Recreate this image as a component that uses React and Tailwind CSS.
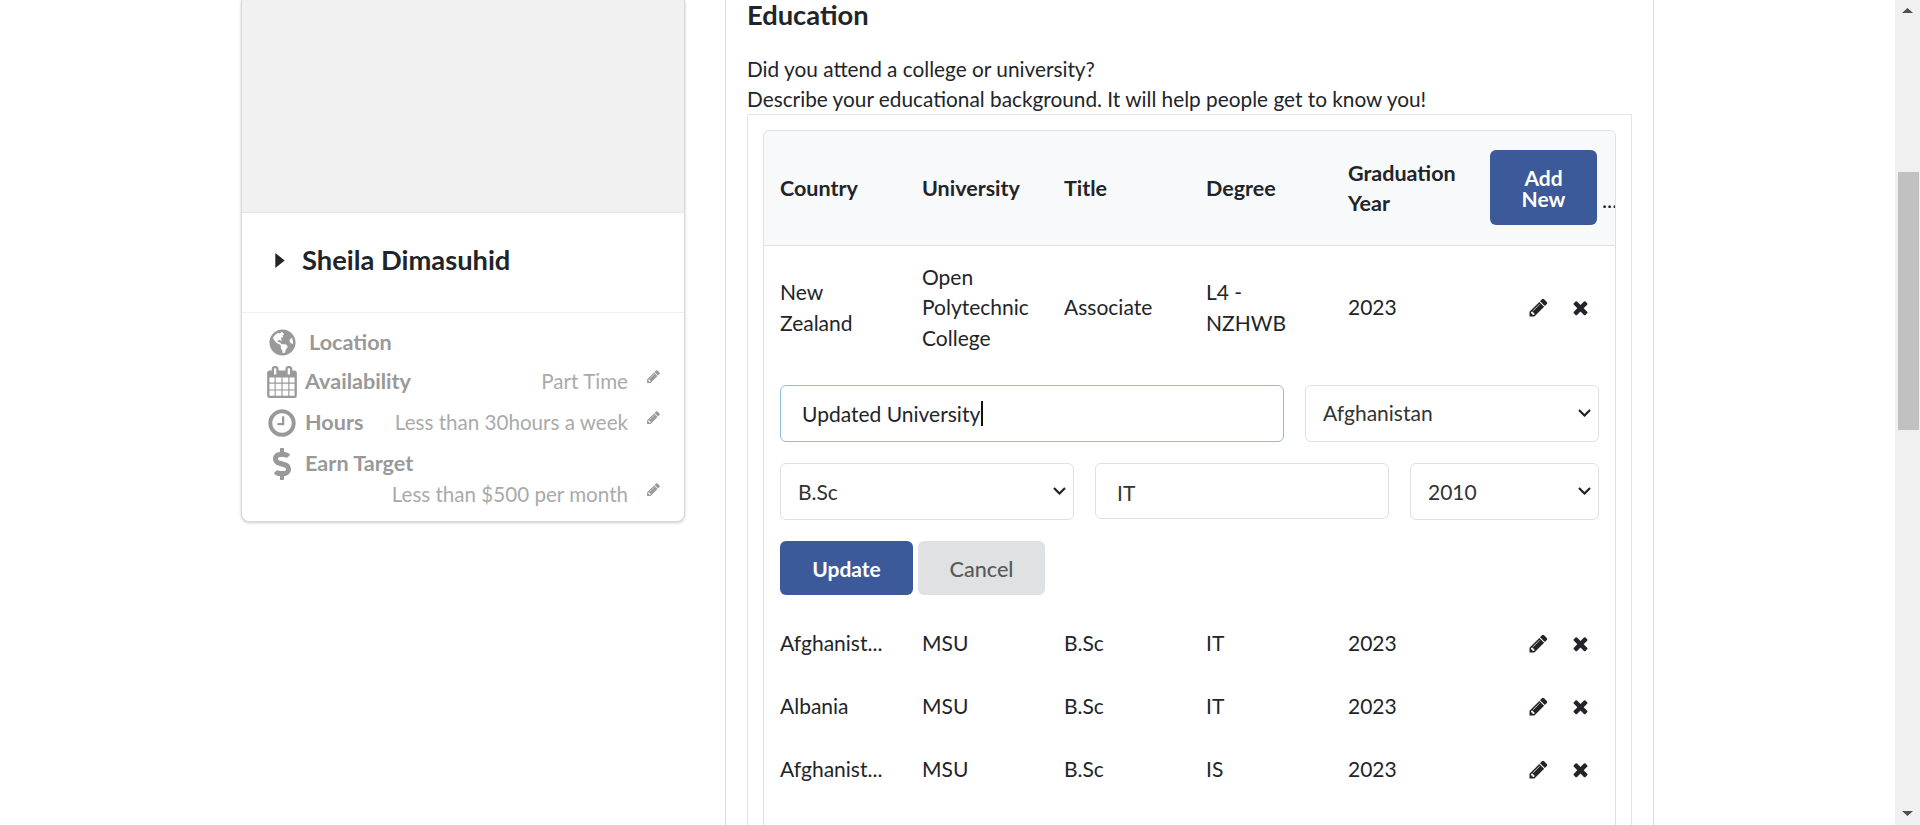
import { FaGlobeAmericas, FaDollarSign } from 'react-icons/fa'

const PENCIL = 'M491 1536l91-91-235-235-91 91v107h128v128h107zm523-928q0-22-22-22-10 0-17 7l-542 542q-7 7-7 17 0 22 22 22 10 0 17-7l542-542q7-7 7-17zm-54-192l416 416-832 832h-416v-416zm683 96q0 53-37 90l-166 166-416-416 166-165q36-38 90-38 53 0 91 38l235 234q37 39 37 91z'
const CLOSE = 'M1490 1322q0 40-28 68l-136 136q-28 28-68 28t-68-28l-294-294-294 294q-28 28-68 28t-68-28l-136-136q-28-28-28-68t28-68l294-294-294-294q-28-28-28-68t28-68l136-136q28-28 68-28t68 28l294 294 294-294q28-28 68-28t68 28l136 136q28 28 28 68t-28 68l-294 294 294 294q28 28 28 68z'
const CLOCK = 'M1024 544v448q0 14-9 23t-23 9h-320q-14 0-23-9t-9-23v-64q0-14 9-23t23-9h224v-352q0-14 9-23t23-9h64q14 0 23 9t9 23zm416 352q0-148-73-273t-198-198-273-73-273 73-198 198-73 273 73 273 198 198 273 73 273-73 198-198 73-273zm224 0q0 209-103 385.5t-279.5 279.5-385.5 103-385.5-103-279.5-279.5-103-385.5 103-385.5 279.5-279.5 385.5-103 385.5 103 279.5 279.5 103 385.5z'
const CALENDAR = 'M192 1664h288v-288h-288v288zm352 0h320v-288h-320v288zm-352-352h288v-320h-288v320zm352 0h320v-320h-320v320zm-352-384h288v-288h-288v288zm736 736h320v-288h-320v288zm-384-736h320v-288h-320v288zm768 736h288v-288h-288v288zm-384-352h320v-320h-320v320zm-352-864v-288q0-13-9.5-22.5t-22.5-9.5h-64q-13 0-22.5 9.5t-9.5 22.5v288q0 13 9.5 22.5t22.5 9.5h64q13 0 22.5-9.5t9.5-22.5zm736 864h288v-320h-288v320zm-384-384h320v-288h-320v288zm384 0h288v-288h-288v288zm32-480v-288q0-13-9.5-22.5t-22.5-9.5h-64q-13 0-22.5 9.5t-9.5 22.5v288q0 13 9.5 22.5t22.5 9.5h64q13 0 22.5-9.5t9.5-22.5zm384-64v1280q0 52-38 90t-90 38h-1408q-52 0-90-38t-38-90v-1280q0-52 38-90t90-38h128v-96q0-66 47-113t113-47h64q66 0 113 47t47 113v96h384v-96q0-66 47-113t113-47h64q66 0 113 47t47 113v96h128q52 0 90 38t38 90z'

const rows = [
  { country: 'Afghanist...', university: 'MSU', title: 'B.Sc', degree: 'IT', year: '2023' },
  { country: 'Albania', university: 'MSU', title: 'B.Sc', degree: 'IT', year: '2023' },
  { country: 'Afghanist...', university: 'MSU', title: 'B.Sc', degree: 'IS', year: '2023' },
]

function Fa({ d, className }) {
  return (
    <svg viewBox="0 0 1792 1792" fill="currentColor" className={className}>
      <path d={d} />
    </svg>
  )
}

function RowActions() {
  return (
    <div className="flex items-center gap-[21px] pl-[38px] text-[#212529]">
      <Fa d={PENCIL} className="w-[21px] h-[21px]" />
      <Fa d={CLOSE} className="w-[21px] h-[21px]" />
    </div>
  )
}

function Detail({ icon, label, value, height, labelClass = 'ml-[8px]' }) {
  return (
    <div className={`flex items-center ${height}`}>
      <div className="w-[32px] flex justify-center shrink-0 text-[#999999]">{icon}</div>
      <span className={`${labelClass} text-[21.6px] font-bold text-[#999999]`}>{label}</span>
      {value && <span className="ml-auto text-[#aaaaaa]">{value}</span>}
      {value && <Fa d={PENCIL} className="w-[15px] h-[15px] ml-[18px] mb-[10px] text-[#999999]" />}
    </div>
  )
}

function Select({ value, width, className = '' }) {
  return (
    <div className={`relative ${width}`}>
      <select
        defaultValue={value}
        className={`w-full h-[57px] pl-[17px] pr-[30px] appearance-none bg-white border border-[#e0e0e0] rounded-[6px] text-[#333333] text-[21px] ${className}`}
      >
        <option>{value}</option>
      </select>
      <svg viewBox="0 0 13 8" fill="none" stroke="#222222" strokeWidth="2.2" className="absolute right-[8px] top-[24px] w-[13px] h-[8px] pointer-events-none">
        <path d="M1 1 L6.5 6.5 L12 1" />
      </svg>
    </div>
  )
}

export default function App() {
  return (
    <div className="flex h-[825px] overflow-hidden bg-white text-[20.8px] leading-[30.6px] text-[#212529] font-['Lato','Liberation_Sans',sans-serif]">
      <div className="flex-1 flex min-w-0 pl-[241px]">
        <aside className="w-[444px] h-[522px] shrink-0 bg-white border-x border-b border-[#d9d9d9] rounded-b-[8px] shadow-[0_1px_3px_rgba(0,0,0,0.2)]">
          <div className="h-[213px] bg-[#f1f1f1] border-b border-[#e6e6e6]" />
          <div className="h-[100px] flex items-center pl-[33px] pb-[5px] border-b border-[#eeeeee]">
            <svg viewBox="0 0 10 16" fill="currentColor" className="w-[10px] h-[15px] text-[#212529]">
              <path d="M0 0 L10 8 L0 16 Z" />
            </svg>
            <h2 className="ml-[17px] text-[27.3px] font-bold">Sheila Dimasuhid</h2>
          </div>
          <div className="pl-[24px] pr-[23px] pt-[10px] text-[20.6px]">
            <Detail height="h-[39px]" icon={<FaGlobeAmericas className="w-[27px] h-[27px]" />} label="Location" labelClass="ml-[11px]" />
            <Detail height="h-[39px]" icon={<Fa d={CALENDAR} className="w-[32px] h-[32px] shrink-0" />} label="Availability" value="Part Time" labelClass="ml-[7px]" />
            <Detail height="h-[43px]" icon={<Fa d={CLOCK} className="w-[32px] h-[32px] shrink-0" />} label="Hours" value="Less than 30hours a week" labelClass="ml-[7px]" />
            <Detail height="h-[39px]" icon={<FaDollarSign className="w-[28px] h-[32px]" />} label="Earn Target" labelClass="ml-[7px]" />
            <div className="flex items-center justify-end h-[23px]">
              <span className="text-[#aaaaaa]">Less than $500 per month</span>
              <Fa d={PENCIL} className="w-[15px] h-[15px] ml-[18px] mb-[10px] text-[#999999]" />
            </div>
          </div>
        </aside>

        <main className="ml-[40px] w-[929px] h-[825px] shrink-0 border-x border-[#d9d9d9] px-[21px]">
          <h1 className="text-[27.3px] font-bold leading-[29px] mb-[25px]">Education</h1>
          <p className="h-[29.6px]">Did you attend a college or university?</p>
          <p>Describe your educational background. It will help people get to know you!</p>
          <div className="border-x border-t border-[#e5e5e5] px-[15px] pt-[15px] h-[800px]">
            <div className="border-x border-t border-[#e0e0e0] rounded-t-[6px] h-[800px]">
              <div className="grid grid-cols-[142px_142px_142px_142px_142px_1fr] items-center h-[115px] pl-[16px] bg-[#f8f9fa] border-b border-[#e0e0e0] rounded-t-[6px] text-[21.5px] font-bold overflow-hidden">
                <span>Country</span>
                <span>University</span>
                <span>Title</span>
                <span>Degree</span>
                <span className="leading-[30px] pr-[20px]">Graduation Year</span>
                <div className="flex items-center">
                  <button className="w-[107px] h-[75px] mb-[1px] shrink-0 px-[16px] bg-[#3c5a99] text-white text-[21px] leading-[21px] font-bold rounded-[6px]">
                    Add New
                  </button>
                  <span className="ml-[5px] mt-[26px] leading-none font-normal">...</span>
                </div>
              </div>

              <div className="grid grid-cols-[142px_142px_142px_142px_142px_1fr] items-center h-[125px] pb-[2px] pl-[16px] text-[21px]">
                <span className="pr-[40px]">New Zealand</span>
                <span className="pr-[20px]">Open Polytechnic College</span>
                <span>Associate</span>
                <span className="pr-[40px]">L4 - NZHWB</span>
                <span>2023</span>
                <RowActions />
              </div>

              <div className="flex gap-[21px] pl-[16px] pt-[14px]">
                <div className="relative">
                  <input
                    readOnly
                    value="Updated University"
                    className="w-[504px] h-[57px] px-[21px] bg-white border border-[#8fbcdb] rounded-[6px] text-[21px] text-[#212529] outline-none"
                  />
                  <div className="absolute left-[201px] top-[16px] w-[2px] h-[25px] bg-[#111111]" />
                </div>
                <Select value="Afghanistan" width="w-[294px]" />
              </div>
              <div className="flex gap-[21px] pl-[16px] pt-[21px]">
                <Select value="B.Sc" width="w-[294px]" className="pt-[2px]" />
                <input
                  readOnly
                  value="IT"
                  className="w-[294px] h-[56px] px-[21px] pt-[2px] bg-white border border-[#e0e0e0] rounded-[6px] text-[21px] text-[#333333] outline-none"
                />
                <Select value="2010" width="w-[189px]" className="pt-[2px]" />
              </div>
              <div className="flex gap-[5px] pl-[16px] pt-[21px]">
                <button className="w-[133px] h-[54px] pt-[2px] bg-[#3c5a99] text-white text-[21px] font-bold rounded-[6px]">Update</button>
                <button className="w-[127px] h-[54px] pt-[2px] bg-[#e0e1e2] text-[#5a5a5a] text-[21.6px] font-medium rounded-[6px]">Cancel</button>
              </div>

              <div className="pt-[17px] text-[21px]">
                {rows.map((row, i) => (
                  <div key={i} className="grid grid-cols-[142px_142px_142px_142px_142px_1fr] items-center h-[63px] pl-[16px]">
                    <span>{row.country}</span>
                    <span>{row.university}</span>
                    <span>{row.title}</span>
                    <span>{row.degree}</span>
                    <span>{row.year}</span>
                    <RowActions />
                  </div>
                ))}
              </div>
            </div>
          </div>
        </main>
      </div>

      <div className="w-[25px] shrink-0 bg-[#f0f0f0] flex flex-col items-center">
        <svg viewBox="0 0 11 5" fill="currentColor" className="w-[11px] h-[5px] mt-[8px] text-[#505050]"><path d="M5.5 0 L11 5 L0 5 Z" /></svg>
        <div className="w-[21px] h-[258px] mt-[159px] ml-[1px] bg-[#c1c1c1]" />
        <svg viewBox="0 0 11 5" fill="currentColor" className="w-[11px] h-[5px] mt-auto mb-[9px] text-[#505050]"><path d="M0 0 L11 0 L5.5 5 Z" /></svg>
      </div>
    </div>
  )
}
